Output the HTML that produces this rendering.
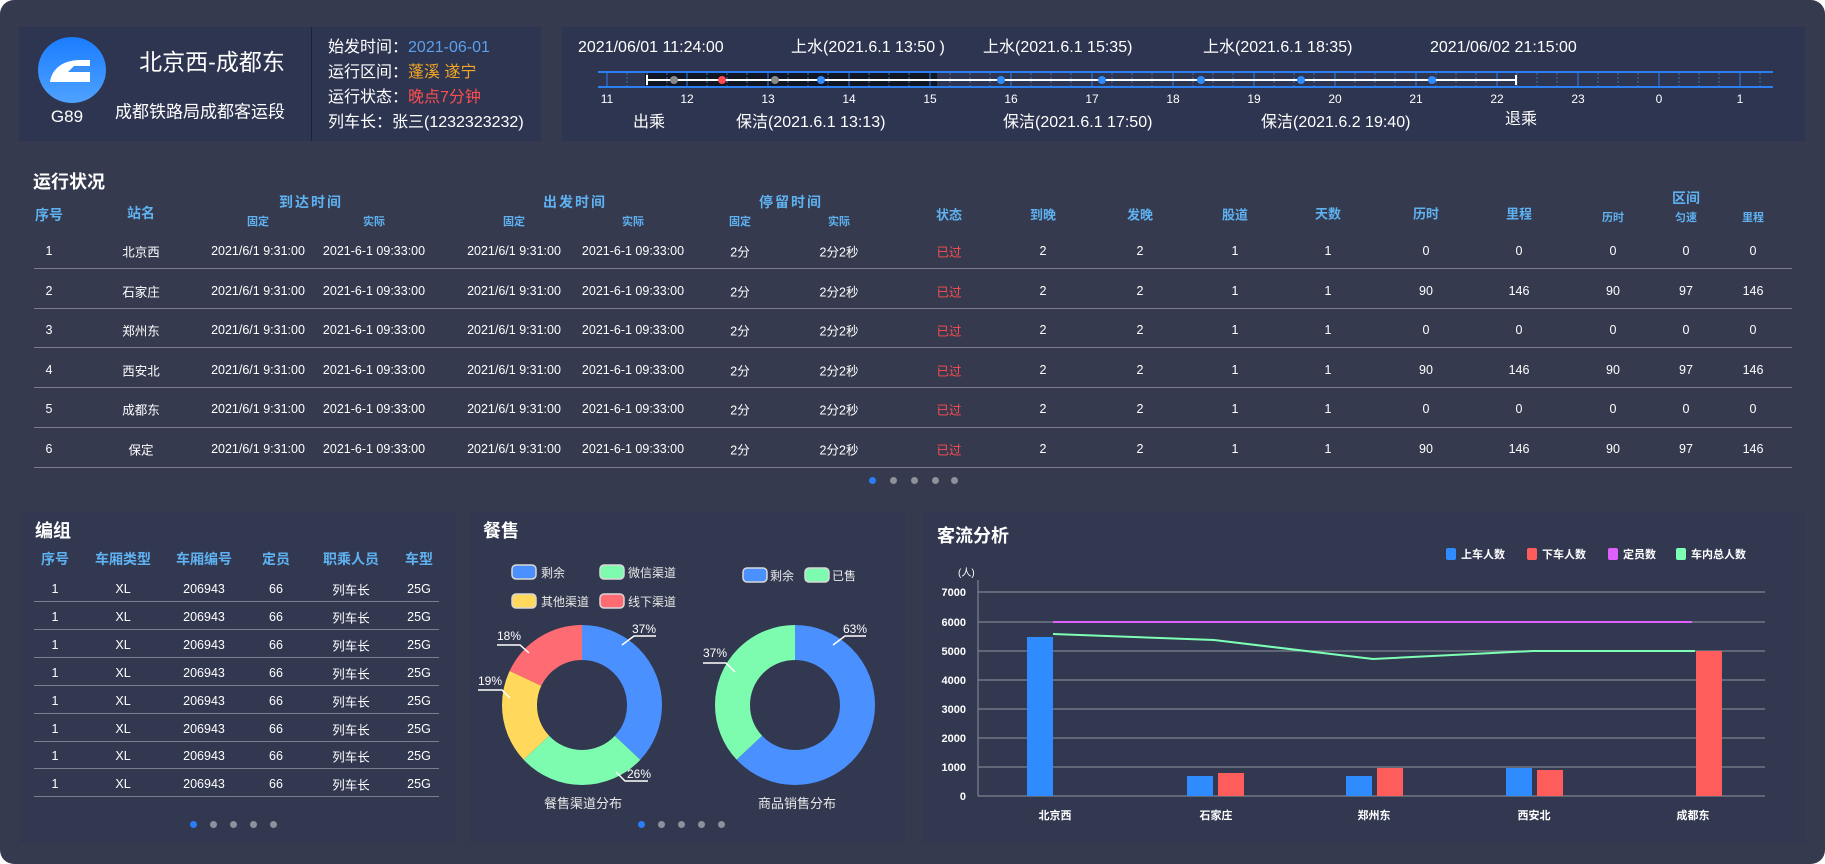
<!DOCTYPE html>
<html><head><meta charset="utf-8">
<style>
*{margin:0;padding:0;box-sizing:border-box}
body{width:1825px;height:864px;background:#fff;overflow:hidden;font-family:"Liberation Sans","Noto Sans CJK SC",sans-serif;color:#fff}
#app{position:absolute;left:0;top:0;width:1825px;height:864px;background:#353a4e;border-radius:14px}
.p{position:absolute;background:#2e3550}
.a{position:absolute;white-space:nowrap}
.c{position:absolute;white-space:nowrap;transform:translate(-50%,-50%)}
.h{color:#5fb2f2;font-weight:bold;font-size:13px}
.r{font-size:12.5px}
.ln{position:absolute;height:1px;background:#7a7e8e}
.dot{position:absolute;width:7px;height:7px;border-radius:50%;background:#8e909c}
.dot.on{background:#2a7ef5}
.t{font-size:18px;font-weight:bold}
.tl{font-size:16px;line-height:20px;height:20px}
</style></head><body><div id="app">

<!-- top panel 1 -->
<div class="p" style="left:19px;top:27px;width:522px;height:114px"></div>
<div class="a" style="left:311px;top:27px;width:1px;height:114px;background:#1c2236"></div>
<div class="a" style="left:38px;top:37px;width:68px;height:66px;border-radius:50%;background:linear-gradient(#1a7cff,#4fa2ff)"></div>
<svg class="a" style="left:44px;top:52px" width="56" height="36" viewBox="0 0 56 36"><path d="M6 30 C8 16 20 8 36 8 L46 8 L46 14 L30 14 L24 20 L46 20 L46 30 Z" fill="#fff"/><path d="M26 19 L31 15 L45 15 L45 19 Z" fill="#3b8ff5"/></svg>
<div class="c" style="left:67px;top:117px;font-size:17px">G89</div>
<div class="c" style="left:212px;top:60px;font-size:23px">北京西-成都东</div>
<div class="c" style="left:200px;top:110px;font-size:17px">成都铁路局成都客运段</div>
<div class="a" style="left:328px;top:35px;font-size:16px;line-height:25px">始发时间：<span style="color:#5aa0ef">2021-06-01</span><br>运行区间：<span style="color:#f5a623">蓬溪 遂宁</span><br>运行状态：<span style="color:#ff4d4f">晚点7分钟</span><br>列车长：张三(1232323232)</div>

<!-- top panel 2 timeline -->
<div class="p" style="left:562px;top:27px;width:1243px;height:114px"></div>
<div class="a tl" style="left:578px;top:38px">2021/06/01 11:24:00</div>
<div class="a tl" style="left:791px;top:38px">上水(2021.6.1 13:50 )</div>
<div class="a tl" style="left:983px;top:38px">上水(2021.6.1 15:35)</div>
<div class="a tl" style="left:1203px;top:38px">上水(2021.6.1 18:35)</div>
<div class="a tl" style="left:1430px;top:38px">2021/06/02 21:15:00</div>
<svg class="a" style="left:0;top:0" width="1825" height="110">
<rect x="645" y="72" width="292" height="15" fill="#111625"/>
<g stroke="#3d6fb0" stroke-width="1" stroke-dasharray="2 2">
<line x1="627" y1="73" x2="627" y2="87"/><line x1="647" y1="73" x2="647" y2="87"/>
<line x1="707" y1="73" x2="707" y2="87"/><line x1="727" y1="73" x2="727" y2="87"/><line x1="747" y1="73" x2="747" y2="87"/><line x1="667" y1="73" x2="667" y2="87"/>
<line x1="788" y1="73" x2="788" y2="87"/><line x1="808" y1="73" x2="808" y2="87"/><line x1="828" y1="73" x2="828" y2="87"/>
<line x1="869" y1="73" x2="869" y2="87"/><line x1="889" y1="73" x2="889" y2="87"/><line x1="909" y1="73" x2="909" y2="87"/>
<line x1="950" y1="73" x2="950" y2="87"/><line x1="970" y1="73" x2="970" y2="87"/><line x1="990" y1="73" x2="990" y2="87"/>
<line x1="1031" y1="73" x2="1031" y2="87"/><line x1="1051" y1="73" x2="1051" y2="87"/><line x1="1071" y1="73" x2="1071" y2="87"/>
<line x1="1112" y1="73" x2="1112" y2="87"/><line x1="1132" y1="73" x2="1132" y2="87"/><line x1="1152" y1="73" x2="1152" y2="87"/>
<line x1="1193" y1="73" x2="1193" y2="87"/><line x1="1213" y1="73" x2="1213" y2="87"/><line x1="1233" y1="73" x2="1233" y2="87"/>
<line x1="1274" y1="73" x2="1274" y2="87"/><line x1="1294" y1="73" x2="1294" y2="87"/><line x1="1314" y1="73" x2="1314" y2="87"/>
<line x1="1355" y1="73" x2="1355" y2="87"/><line x1="1375" y1="73" x2="1375" y2="87"/><line x1="1395" y1="73" x2="1395" y2="87"/>
<line x1="1436" y1="73" x2="1436" y2="87"/><line x1="1456" y1="73" x2="1456" y2="87"/><line x1="1476" y1="73" x2="1476" y2="87"/>
<line x1="1517" y1="73" x2="1517" y2="87"/><line x1="1537" y1="73" x2="1537" y2="87"/><line x1="1557" y1="73" x2="1557" y2="87"/>
<line x1="1598" y1="73" x2="1598" y2="87"/><line x1="1618" y1="73" x2="1618" y2="87"/><line x1="1638" y1="73" x2="1638" y2="87"/>
<line x1="1679" y1="73" x2="1679" y2="87"/><line x1="1699" y1="73" x2="1699" y2="87"/><line x1="1719" y1="73" x2="1719" y2="87"/>
<line x1="1760" y1="73" x2="1760" y2="87"/>
</g>
<g stroke="#2c7ff0" stroke-width="1">
<line x1="598" y1="72" x2="1773" y2="72" stroke-width="2"/><line x1="598" y1="87" x2="1773" y2="87" stroke-width="2"/>
<line x1="607" y1="72" x2="607" y2="87"/><line x1="687" y1="72" x2="687" y2="87"/><line x1="768" y1="72" x2="768" y2="87"/><line x1="849" y1="72" x2="849" y2="87"/><line x1="930" y1="72" x2="930" y2="87"/><line x1="1011" y1="72" x2="1011" y2="87"/><line x1="1092" y1="72" x2="1092" y2="87"/><line x1="1173" y1="72" x2="1173" y2="87"/><line x1="1254" y1="72" x2="1254" y2="87"/><line x1="1335" y1="72" x2="1335" y2="87"/><line x1="1416" y1="72" x2="1416" y2="87"/><line x1="1497" y1="72" x2="1497" y2="87"/><line x1="1578" y1="72" x2="1578" y2="87"/><line x1="1659" y1="72" x2="1659" y2="87"/><line x1="1740" y1="72" x2="1740" y2="87"/>
</g>
<line x1="647" y1="80" x2="1516" y2="80" stroke="#fff" stroke-width="2"/>
<line x1="647" y1="75" x2="647" y2="85" stroke="#fff" stroke-width="2"/><line x1="1516" y1="75" x2="1516" y2="85" stroke="#fff" stroke-width="2"/>
<circle cx="674" cy="80" r="4" fill="#8a8a8a"/><circle cx="722" cy="80" r="4" fill="#ff4d4f"/><circle cx="775" cy="80" r="4" fill="#8a8a8a"/>
<g fill="#2f8cff"><circle cx="821" cy="80" r="4"/><circle cx="1001" cy="80" r="4"/><circle cx="1102" cy="80" r="4"/><circle cx="1201" cy="80" r="4"/><circle cx="1301" cy="80" r="4"/><circle cx="1432" cy="80" r="4"/></g>
<g fill="#fff" font-size="12" text-anchor="middle" font-family="Liberation Sans,sans-serif">
<text x="607" y="103">11</text><text x="687" y="103">12</text><text x="768" y="103">13</text><text x="849" y="103">14</text><text x="930" y="103">15</text><text x="1011" y="103">16</text><text x="1092" y="103">17</text><text x="1173" y="103">18</text><text x="1254" y="103">19</text><text x="1335" y="103">20</text><text x="1416" y="103">21</text><text x="1497" y="103">22</text><text x="1578" y="103">23</text><text x="1659" y="103">0</text><text x="1740" y="103">1</text>
</g></svg>
<div class="a tl" style="left:633px;top:113px">出乘</div>
<div class="a tl" style="left:736px;top:113px">保洁(2021.6.1 13:13)</div>
<div class="a tl" style="left:1003px;top:113px">保洁(2021.6.1 17:50)</div>
<div class="a tl" style="left:1261px;top:113px">保洁(2021.6.2 19:40)</div>
<div class="a tl" style="left:1505px;top:110px">退乘</div>

<!-- 运行状况 -->
<div class="a t" style="left:33px;top:168px">运行状况</div>
<div class="c h" style="left:49px;top:215px;font-size:14px">序号</div>
<div class="c h" style="left:141px;top:213px;font-size:14px">站名</div>
<div class="c h" style="left:311px;top:202px;font-size:14px;letter-spacing:2px">到达时间</div>
<div class="c h" style="left:258px;top:221px;font-size:11px">固定</div><div class="c h" style="left:374px;top:221px;font-size:11px">实际</div>
<div class="c h" style="left:575px;top:202px;font-size:14px;letter-spacing:2px">出发时间</div>
<div class="c h" style="left:514px;top:221px;font-size:11px">固定</div><div class="c h" style="left:633px;top:221px;font-size:11px">实际</div>
<div class="c h" style="left:791px;top:202px;font-size:14px;letter-spacing:2px">停留时间</div>
<div class="c h" style="left:740px;top:221px;font-size:11px">固定</div><div class="c h" style="left:839px;top:221px;font-size:11px">实际</div>
<div class="c h" style="left:949px;top:214px">状态</div><div class="c h" style="left:1043px;top:214px">到晚</div><div class="c h" style="left:1140px;top:214px">发晚</div><div class="c h" style="left:1235px;top:214px">股道</div><div class="c h" style="left:1328px;top:213px">天数</div><div class="c h" style="left:1426px;top:213px">历时</div><div class="c h" style="left:1519px;top:213px">里程</div>
<div class="c h" style="left:1686px;top:198px;font-size:14px">区间</div>
<div class="c h" style="left:1613px;top:217px;font-size:11px">历时</div><div class="c h" style="left:1686px;top:217px;font-size:11px">匀速</div><div class="c h" style="left:1753px;top:217px;font-size:11px">里程</div>

<div id="rows"></div>
<div class="ln" style="left:34px;top:268px;width:1758px"></div>
<div class="ln" style="left:34px;top:308px;width:1758px"></div>
<div class="ln" style="left:34px;top:347px;width:1758px"></div>
<div class="ln" style="left:34px;top:387px;width:1758px"></div>
<div class="ln" style="left:34px;top:427px;width:1758px"></div>
<div class="ln" style="left:34px;top:467px;width:1758px"></div>
<div class="dot on" style="left:869px;top:477px"></div><div class="dot" style="left:890px;top:477px"></div><div class="dot" style="left:911px;top:477px"></div><div class="dot" style="left:932px;top:477px"></div><div class="dot" style="left:951px;top:477px"></div>

<!-- 编组 -->
<div class="a" style="left:20px;top:512px;width:436px;height:331px;background:#323850"></div>
<div class="a t" style="left:35px;top:517px">编组</div>
<div class="c h" style="left:55px;top:559px;font-size:14px">序号</div><div class="c h" style="left:123px;top:559px;font-size:14px">车厢类型</div><div class="c h" style="left:204px;top:559px;font-size:14px">车厢编号</div><div class="c h" style="left:276px;top:559px;font-size:14px">定员</div><div class="c h" style="left:351px;top:559px;font-size:14px">职乘人员</div><div class="c h" style="left:419px;top:559px;font-size:14px">车型</div>
<div id="brows"></div>
<div class="dot on" style="left:190px;top:821px"></div><div class="dot" style="left:210px;top:821px"></div><div class="dot" style="left:230px;top:821px"></div><div class="dot" style="left:250px;top:821px"></div><div class="dot" style="left:270px;top:821px"></div>

<!-- 餐售 -->
<div class="a" style="left:469px;top:512px;width:436px;height:331px;background:#323850"></div>
<div class="a t" style="left:483px;top:517px">餐售</div>
<svg class="a" style="left:460px;top:500px" width="450" height="364" font-family="Liberation Sans,Noto Sans CJK SC,sans-serif">
<g stroke="#d8d8d8" stroke-width="1.5">
<rect x="52" y="65" width="24" height="14" rx="4" fill="#4a90ff"/><rect x="140" y="65" width="24" height="14" rx="4" fill="#7dfcb0"/>
<rect x="52" y="94" width="24" height="14" rx="4" fill="#ffd85c"/><rect x="140" y="94" width="24" height="14" rx="4" fill="#ff6b72"/>
<rect x="283" y="68" width="24" height="14" rx="4" fill="#4a90ff"/><rect x="345" y="68" width="24" height="14" rx="4" fill="#7dfcb0"/>
</g>
<g fill="#e8e8e8" font-size="12">
<text x="81" y="77">剩余</text><text x="168" y="77">微信渠道</text><text x="81" y="106">其他渠道</text><text x="168" y="106">线下渠道</text>
<text x="310" y="80">剩余</text><text x="372" y="80">已售</text>
</g>
<g transform="rotate(-90 122 205)" fill="none" stroke-width="35">
<circle cx="122" cy="205" r="62.5" stroke="#4a90ff" stroke-dasharray="145.3 400"/>
<circle cx="122" cy="205" r="62.5" stroke="#7dfcb0" stroke-dasharray="102.1 400" stroke-dashoffset="-145.3"/>
<circle cx="122" cy="205" r="62.5" stroke="#ffd85c" stroke-dasharray="74.6 400" stroke-dashoffset="-247.4"/>
<circle cx="122" cy="205" r="62.5" stroke="#ff6b72" stroke-dasharray="70.7 400" stroke-dashoffset="-322"/>
</g>
<g transform="rotate(-90 335 205)" fill="none" stroke-width="35">
<circle cx="335" cy="205" r="62.5" stroke="#4a90ff" stroke-dasharray="247.4 400"/>
<circle cx="335" cy="205" r="62.5" stroke="#7dfcb0" stroke-dasharray="145.3 400" stroke-dashoffset="-247.4"/>
</g>
<g stroke="#fff" stroke-width="1.5" fill="none">
<polyline points="162,145 174,136 196,136"/><polyline points="156,272 165,281 188,281"/>
<polyline points="18,190 42,190 50,198"/><polyline points="37,145 60,145 69,153"/>
<polyline points="373,145 385,136 406,136"/><polyline points="243,163 266,163 275,172"/>
</g>
<g fill="#fff" font-size="12">
<text x="172" y="133">37%</text><text x="167" y="278">26%</text><text x="18" y="185">19%</text><text x="37" y="140">18%</text>
<text x="383" y="133">63%</text><text x="243" y="157">37%</text>
</g>
<g fill="#e8e8e8" font-size="13" text-anchor="middle"><text x="123" y="308">餐售渠道分布</text><text x="337" y="308">商品销售分布</text></g>
</svg>
<div class="dot on" style="left:638px;top:821px"></div><div class="dot" style="left:658px;top:821px"></div><div class="dot" style="left:678px;top:821px"></div><div class="dot" style="left:698px;top:821px"></div><div class="dot" style="left:718px;top:821px"></div>

<!-- 客流分析 -->
<div class="a" style="left:923px;top:512px;width:882px;height:331px;background:#323850"></div>
<div class="a t" style="left:937px;top:522px">客流分析</div>
<svg class="a" style="left:0;top:500px" width="1825" height="364" font-family="Liberation Sans,Noto Sans CJK SC,sans-serif">
<g font-size="11" font-weight="bold" fill="#fff">
<rect x="1446" y="48" width="10" height="12" rx="2" fill="#2f8cff"/><text x="1461" y="58">上车人数</text>
<rect x="1527" y="48" width="10" height="12" rx="2" fill="#ff5c5c"/><text x="1542" y="58">下车人数</text>
<rect x="1608" y="48" width="10" height="12" rx="2" fill="#e060ff"/><text x="1623" y="58">定员数</text>
<rect x="1676" y="48" width="10" height="12" rx="2" fill="#7dffb5"/><text x="1691" y="58">车内总人数</text>
<text x="958" y="76" font-size="10" font-weight="normal">(人)</text>
</g>
<g stroke="#80838f" stroke-width="1.2">
<line x1="978" y1="92" x2="1765" y2="92"/><line x1="978" y1="122" x2="1765" y2="122"/><line x1="978" y1="151" x2="1765" y2="151"/><line x1="978" y1="180" x2="1765" y2="180"/><line x1="978" y1="209" x2="1765" y2="209"/><line x1="978" y1="238" x2="1765" y2="238"/><line x1="978" y1="267" x2="1765" y2="267"/><line x1="978" y1="296" x2="1765" y2="296"/>
<line x1="978" y1="80" x2="978" y2="296"/>
</g>
<g fill="#fff" font-size="11" text-anchor="end" font-weight="bold">
<text x="966" y="96">7000</text><text x="966" y="126">6000</text><text x="966" y="155">5000</text><text x="966" y="184">4000</text><text x="966" y="213">3000</text><text x="966" y="242">2000</text><text x="966" y="271">1000</text><text x="966" y="300">0</text>
</g>
<g fill="#2f8cff"><rect x="1027" y="137" width="26" height="159"/><rect x="1187" y="276" width="26" height="20"/><rect x="1346" y="276" width="26" height="20"/><rect x="1506" y="268" width="26" height="28"/></g>
<g fill="#ff5c5c"><rect x="1218" y="273" width="26" height="23"/><rect x="1377" y="268" width="26" height="28"/><rect x="1537" y="270" width="26" height="26"/><rect x="1696" y="151" width="26" height="145"/></g>
<line x1="1053" y1="122" x2="1692" y2="122" stroke="#e060ff" stroke-width="2"/>
<polyline points="1053,134 1214,140 1373,159 1533,151 1695,151" fill="none" stroke="#7dffb5" stroke-width="2"/>
<g fill="#fff" font-size="11" text-anchor="middle" font-weight="bold"><text x="1055" y="319">北京西</text><text x="1216" y="319">石家庄</text><text x="1374" y="319">郑州东</text><text x="1534" y="319">西安北</text><text x="1693" y="319">成都东</text></g>
</svg>

<script>
var cx=[49,141,258,374,514,633,740,839,949,1043,1140,1235,1328,1426,1519,1613,1686,1753];
var st=['北京西','石家庄','郑州东','西安北','成都东','保定'];
var h='';
for(var i=0;i<6;i++){var y=251+i*39.6;var z=i%2==1;
var v=[i+1,st[i],'2021/6/1 9:31:00','2021-6-1 09:33:00','2021/6/1 9:31:00','2021-6-1 09:33:00','2分','2分2秒','已过',2,2,1,1,z?90:0,z?146:0,z?90:0,z?97:0,z?146:0];
for(var j=0;j<18;j++){h+='<div class="c r" style="left:'+cx[j]+'px;top:'+y+'px'+(j==8?';color:#ff4d4f':'')+'">'+v[j]+'</div>';}}
document.getElementById('rows').innerHTML=h;
var bx=[55,123,204,276,351,419],bv=['1','XL','206943','66','列车长','25G'];h='';
for(var i=0;i<8;i++){var y=589+i*27.9;
for(var j=0;j<6;j++)h+='<div class="c r" style="left:'+bx[j]+'px;top:'+y+'px">'+bv[j]+'</div>';
h+='<div class="ln" style="left:34px;top:'+Math.round(y+12)+'px;width:405px"></div>';}
document.getElementById('brows').innerHTML=h;
</script>
</div></body></html>
